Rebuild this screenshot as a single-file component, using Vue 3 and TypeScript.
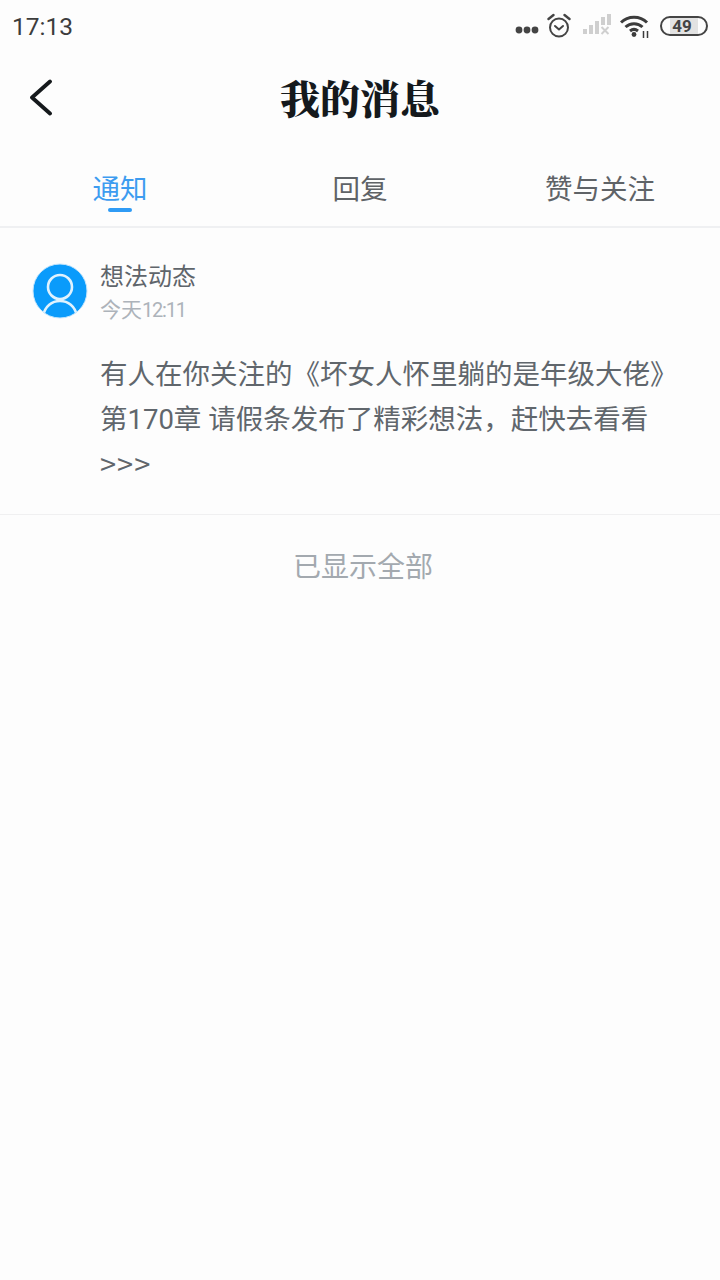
<script setup lang="ts">
const tabs = [
  { label: '通知', active: true },
  { label: '回复', active: false },
  { label: '赞与关注', active: false },
]
</script>

<template>
  <div class="page">
    <div class="status-bar">
      <span class="clock">17:13</span>
      <div class="status-icons">
        <svg class="dots" width="24" height="8" viewBox="0 0 24 8">
          <circle cx="4" cy="4" r="3.400" fill="#444" />
          <circle cx="12" cy="4" r="3.400" fill="#444" />
          <circle cx="20" cy="4" r="3.400" fill="#444" />
        </svg>
        <svg class="alarm" width="24" height="26" viewBox="0 0 24 26" fill="none" stroke="#444">
          <circle cx="12" cy="14.500" r="9" stroke-width="2" />
          <path d="M8 13l4 3.500 4-3.500" stroke-width="2" stroke-linecap="round" stroke-linejoin="round" />
          <path d="M1.500 6l5-4M22.500 6l-5-4" stroke-width="2.400" stroke-linecap="round" />
        </svg>
        <svg class="signal" width="28" height="22" viewBox="0 0 28 22" fill="#cfcfcf">
          <rect x="0" y="15" width="4" height="5" />
          <rect x="6" y="11" width="4" height="9" />
          <rect x="12" y="7" width="4" height="13" />
          <rect x="18" y="3" width="4" height="8" />
          <path d="M18.500 13l7 7M25.500 13l-7 7" stroke="#cfcfcf" stroke-width="2" fill="none" />
          <rect x="24" y="0" width="4" height="11" />
        </svg>
        <svg class="wifi" width="30" height="24" viewBox="0 0 30 24" fill="none" stroke="#3c3c3c" stroke-width="3">
          <path d="M1 8.500C8 1.500 20 1.500 27 8.500" />
          <path d="M5.500 13c4.700-4.500 12.300-4.500 17 0" />
          <path d="M10 17c2.500-2 5.500-2 8 0" />
          <circle cx="14" cy="20.500" r="2.400" fill="#3c3c3c" stroke="none" />
          <path d="M23.500 17v7M27.500 17v7" stroke-width="1.500" />
        </svg>
        <div class="battery">
          <div class="battery-fill"></div>
          <span class="battery-num">49</span>
        </div>
      </div>
    </div>

    <header class="nav">
      <svg class="back" width="26" height="38" viewBox="0 0 26 38" fill="none">
        <path d="M22 2.500L4 18.500 22 34.500" stroke="#15191c" stroke-width="3.800" stroke-linecap="round" stroke-linejoin="round" />
      </svg>
      <h1 class="title">我的消息</h1>
    </header>

    <nav class="tabs">
      <div v-for="tab in tabs" :key="tab.label" class="tab" :class="{ active: tab.active }">
        {{ tab.label }}
      </div>
    </nav>

    <section class="message">
      <div class="message-head">
        <svg class="avatar" width="56" height="56" viewBox="0 0 56 56">
          <defs>
            <clipPath id="avatar-clip"><circle cx="28" cy="28" r="27" /></clipPath>
          </defs>
          <circle cx="28" cy="28" r="27" fill="#0a9bfb" stroke="#c5e6fd" stroke-width="1" />
          <g clip-path="url(#avatar-clip)" fill="none" stroke="#dff2fe" stroke-width="2.600">
            <circle cx="28" cy="24" r="12" />
            <path d="M11 53c2-10 9-15 17-15s15 5 17 15" />
          </g>
        </svg>
        <div class="head-text">
          <div class="from">想法动态</div>
          <div class="time">今天<span class="time-digits">12:11</span></div>
        </div>
      </div>
      <p class="body">有人在你关注的《坏女人怀里躺的是年级大佬》第170章 请假条发布了精彩想法，赶快去看看<span class="more">&gt;&gt;&gt;</span></p>
    </section>

    <div class="end">已显示全部</div>
  </div>
</template>

<style>
html,
body {
  margin: 0;
  background: #fdfdfd;
}
</style>

<style scoped>
.page {
  width: 720px;
  height: 1280px;
  background: #fdfdfd;
  font-family: Roboto, "Noto Sans CJK SC", sans-serif;
  overflow: hidden;
}

.status-bar {
  height: 54px;
  display: flex;
  align-items: center;
  justify-content: space-between;
  padding: 0 12px 2px;
  box-sizing: border-box;
}

.clock {
  font-size: 24.500px;
  color: #3c3c3c;
}

.status-icons {
  display: flex;
  align-items: center;
}

.dots {
  margin: 8px 8px 0 0;
}

.alarm {
  margin: -1px 12px 0 0;
}

.signal {
  margin: -2px 9px 0 0;
}

.wifi {
  margin: -1px 10px 0 0;
}

.battery {
  position: relative;
  width: 48px;
  height: 20px;
  border: 2px solid #444;
  border-radius: 11px;
  box-sizing: border-box;
  overflow: hidden;
  margin-top: -1px;
}

.battery-fill {
  width: 28px;
  height: 100%;
  margin-left: 8px;
  background: #e2e2e2;
}

.battery-num {
  position: absolute;
  left: 0;
  right: 4px;
  top: -2px;
  text-align: center;
  font-size: 17px;
  line-height: 20px;
  font-weight: 700;
  color: #444;
}

.nav {
  height: 91px;
  display: flex;
  align-items: center;
  justify-content: center;
  position: relative;
  padding-bottom: 6px;
  box-sizing: border-box;
}

.back {
  position: absolute;
  left: 28px;
  top: 25px;
}

.title {
  margin: 0;
  font-size: 40px;
  font-weight: 900;
  color: #15191c;
  font-family: "Noto Serif CJK SC", "Noto Sans CJK SC", serif;
}

.tabs {
  height: 81px;
  display: grid;
  grid-template-columns: repeat(3, 1fr);
  border-bottom: 2px solid #eff0f2;
}

.tab {
  text-align: center;
  font-size: 27.500px;
  line-height: 90px;
  color: #5f6367;
  position: relative;
}

.tab.active {
  color: #3d9cf0;
}

.tab.active::after {
  content: "";
  position: absolute;
  left: 50%;
  bottom: 23px;
  width: 24px;
  height: 4px;
  margin-left: -12px;
  border-radius: 2px;
  background: #2f9bf5;
}

.message {
  padding: 32px 50px 22px 32px;
  height: 287px;
  box-sizing: border-box;
  border-bottom: 1px solid #f0f0f1;
}

.message-head {
  display: flex;
  align-items: center;
}

.avatar {
  flex-shrink: 0;
  margin-top: -2px;
}

.head-text {
  margin: 3px 0 0 12px;
}

.from {
  font-size: 24px;
  line-height: 28px;
  color: #5f656b;
}

.time {
  margin-top: 6px;
  font-size: 21px;
  line-height: 26px;
  color: #adb3ba;
}

.time-digits {
  font-size: 20px;
  letter-spacing: -1.200px;
}

.body {
  margin: 29px 0 0 68px;
  font-size: 27.500px;
  line-height: 45px;
  color: #60666c;
}

.more {
  font-family: "Noto Sans CJK SC", sans-serif;
  font-size: 29px;
  letter-spacing: 1px;
  position: relative;
  top: -2px;
}

.end {
  text-align: center;
  margin-top: 34px;
  padding-left: 6px;
  font-size: 28px;
  line-height: 38px;
  color: #a3a9af;
}
</style>
